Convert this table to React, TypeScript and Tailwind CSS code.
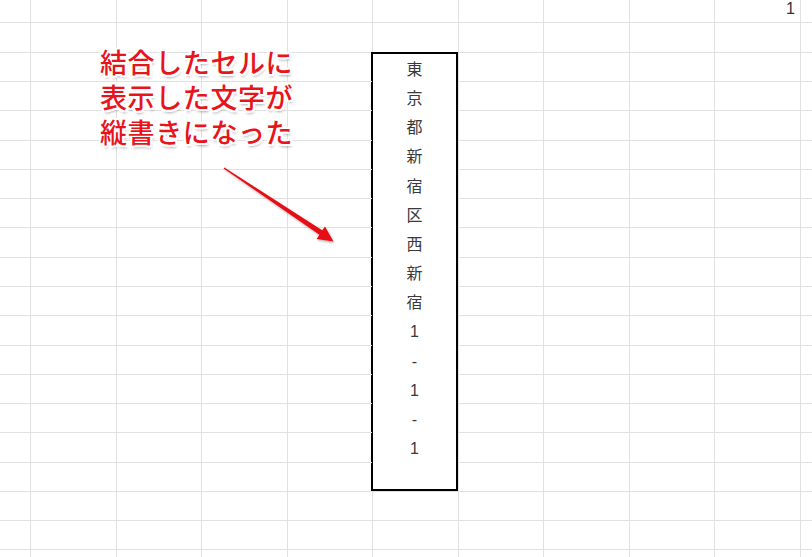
import React from 'react';

const rowCount = 20;
const colCount = 11;
const chars = ['東', '京', '都', '新', '宿', '区', '西', '新', '宿', '1', '-', '1', '-', '1'];

const Cell = ({ r, c }: { r: number; c: number }) => {
  const cls = [
    'border-[#e1e1e1]',
    r > 0 ? 'border-t' : '',
    c > 0 ? 'border-l' : '',
  ].join(' ');
  if (r === 0 && c === 9) {
    return (
      <div className={cls + ' text-right pr-[5px] text-[16px] leading-[17px] text-[#333]'}>1</div>
    );
  }
  return <div className={cls} />;
};

const App = () => {
  const cells: React.ReactNode[] = [];
  for (let r = 0; r < rowCount; r++) {
    for (let c = 0; c < colCount; c++) {
      // merged cell region: column 6, rows 2..16
      if (c === 5 && r >= 2 && r <= 16) {
        if (r === 2) {
          cells.push(
            <div
              key={`${r}-${c}`}
              className="row-[3/18] col-[6/7] border-2 border-black -ml-px bg-white flex flex-col items-center pt-[1px] text-[16px] leading-[29.15px] text-[#3a3a3a]"
            >
              {chars.map((ch, i) => (
                <span key={i}>{ch}</span>
              ))}
            </div>
          );
        }
        continue;
      }
      cells.push(<Cell key={`${r}-${c}`} r={r} c={c} />);
    }
  }

  return (
    <div className="relative w-[812px] h-[557px] overflow-hidden bg-white font-['Liberation_Sans','Noto_Sans_CJK_JP',sans-serif]">
      <div className="grid grid-cols-[30px_86px_85px_86px_85px_86px_85px_86px_85px_86px_12px] grid-rows-[22px_30px_29px_29px_30px_29px_29px_29px_30px_29px_29px_30px_29px_29px_29px_30px_29px_29px_29px_29px]">
        {cells}
      </div>

      <div className="absolute left-[100px] top-[44px] font-['Noto_Sans_CJK_JP',sans-serif] font-medium text-[27px] leading-[35px] tracking-[0.6px] text-[#e8141c] [text-shadow:2px_0_0_#fff,-2px_0_0_#fff,0_2px_0_#fff,0_-2px_0_#fff,2px_2px_0_#fff,-2px_-2px_0_#fff,2px_-2px_0_#fff,-2px_2px_0_#fff,1px_3px_3px_rgba(0,0,0,0.35)]">
        <div>結合したセルに</div>
        <div>表示した文字が</div>
        <div>縦書きになった</div>
      </div>

      <svg className="absolute left-0 top-0" width="812" height="557" viewBox="0 0 812 557">
        <defs>
          <filter id="sh" x="-20%" y="-20%" width="140%" height="140%">
            <feDropShadow dx="1" dy="1.5" stdDeviation="1" floodColor="#000" floodOpacity="0.3" />
          </filter>
        </defs>
        <polygon
          filter="url(#sh)"
          fill="#e60f17"
          points="223.6,168.4 224.4,167.6 322.2,230.3 325,226.6 333.5,241.5 316.5,239.0 319.4,234.8"
        />
      </svg>
    </div>
  );
};

export default App;
